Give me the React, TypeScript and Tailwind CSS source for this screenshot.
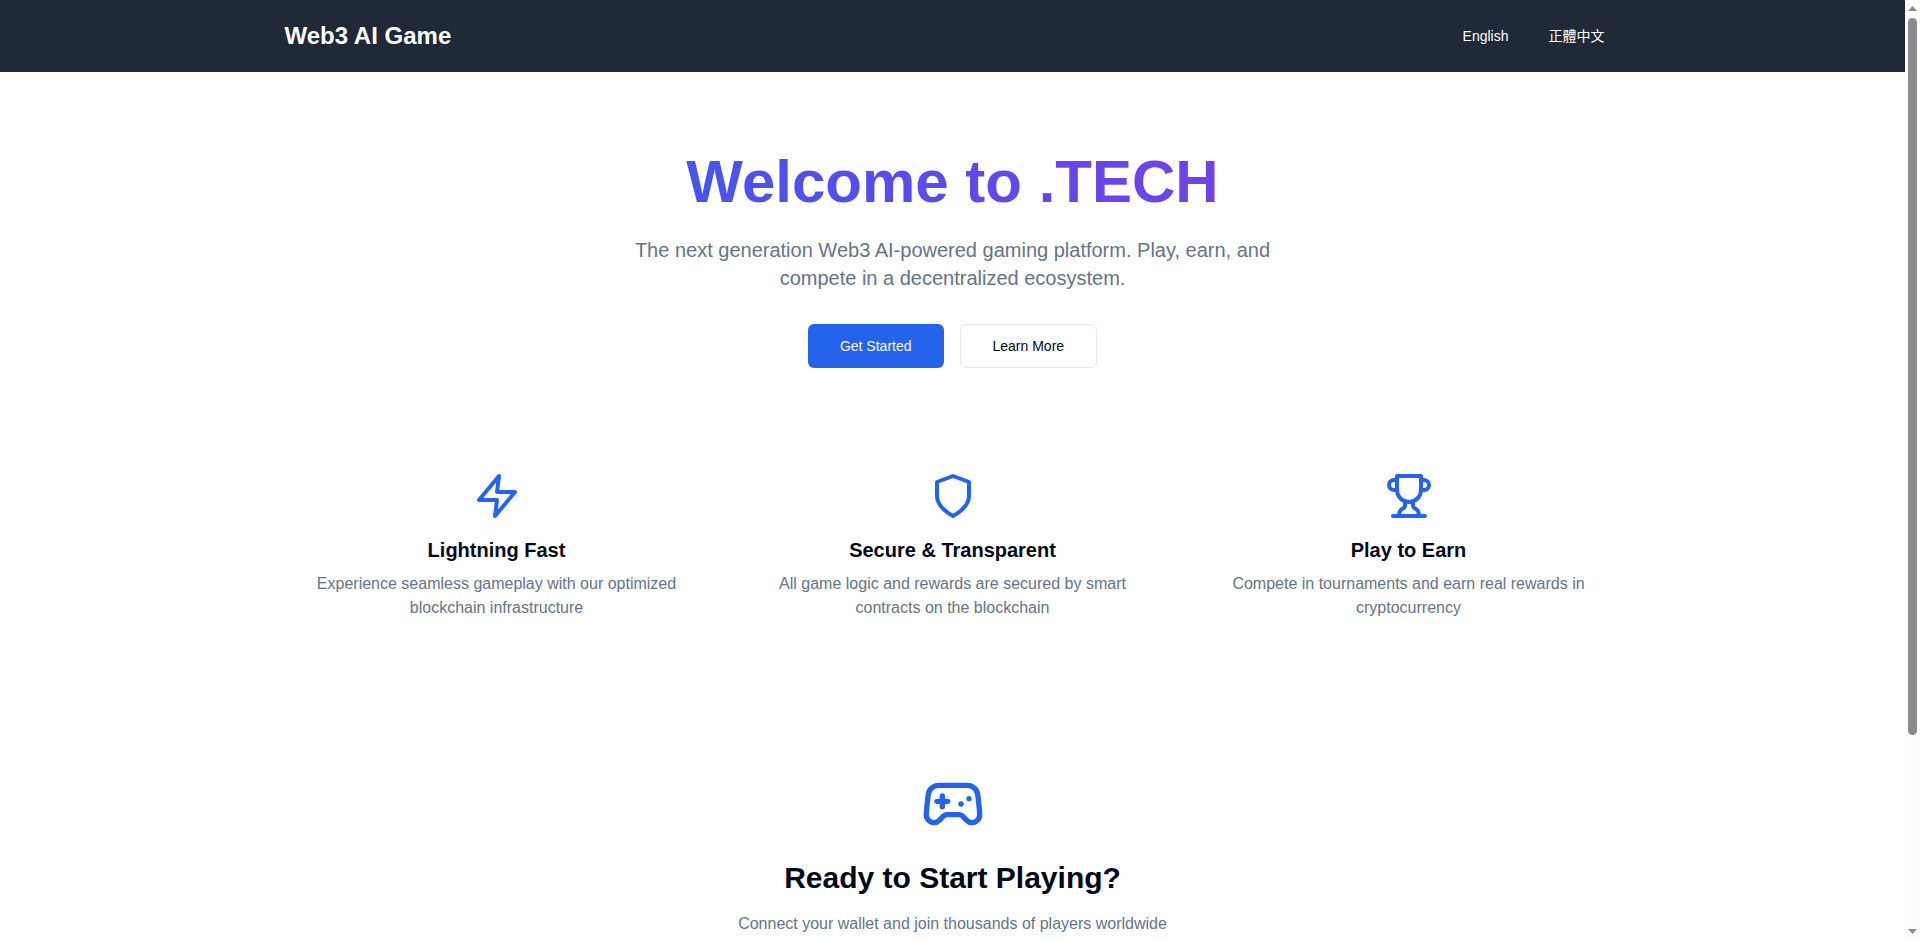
import React from "react";
import { Gamepad2 } from "lucide-react";

type IconProps = { className?: string };

function OutlineIcon({ className, children }: IconProps & { children: React.ReactNode }) {
  return (
    <svg
      className={className}
      viewBox="0 0 24 24"
      fill="none"
      stroke="currentColor"
      strokeWidth="2"
      strokeLinecap="round"
      strokeLinejoin="round"
      aria-hidden="true"
    >
      {children}
    </svg>
  );
}

function BoltIcon({ className }: IconProps) {
  return (
    <OutlineIcon className={className}>
      <polygon points="13 2 3 14 12 14 11 22 21 10 12 10 13 2" />
    </OutlineIcon>
  );
}

function ShieldIcon({ className }: IconProps) {
  return (
    <OutlineIcon className={className}>
      <path d="M12 22s8-4 8-10V5l-8-3-8 3v7c0 6 8 10 8 10" />
    </OutlineIcon>
  );
}

function TrophyIcon({ className }: IconProps) {
  return (
    <OutlineIcon className={className}>
      <path d="M6 9H4.5a2.5 2.5 0 0 1 0-5H6" />
      <path d="M18 9h1.5a2.5 2.5 0 0 0 0-5H18" />
      <path d="M4 22h16" />
      <path d="M10 14.66V17c0 .55-.47.98-.97 1.21C7.85 18.75 7 20.24 7 22" />
      <path d="M14 14.66V17c0 .55.47.98.97 1.21C16.15 18.75 17 20.24 17 22" />
      <path d="M18 2H6v7a6 6 0 0 0 12 0V2Z" />
    </OutlineIcon>
  );
}

const features = [
  {
    icon: BoltIcon,
    title: "Lightning Fast",
    text: "Experience seamless gameplay with our optimized blockchain infrastructure",
  },
  {
    icon: ShieldIcon,
    title: "Secure & Transparent",
    text: "All game logic and rewards are secured by smart contracts on the blockchain",
  },
  {
    icon: TrophyIcon,
    title: "Play to Earn",
    text: "Compete in tournaments and earn real rewards in cryptocurrency",
  },
];

function Header() {
  return (
    <header className="bg-[#1f2937] text-white">
      <div className="mx-auto flex max-w-[1400px] items-center justify-between px-8 py-4">
        <a href="#" className="text-2xl font-bold">
          Web3 AI Game
        </a>
        <nav className="flex gap-2 text-sm">
          <button type="button" className="h-10 px-4">
            English
          </button>
          <button type="button" className="h-10 px-4">
            正體中文
          </button>
        </nav>
      </div>
    </header>
  );
}

function Hero() {
  return (
    <section className="py-20 text-center">
      <h1 className="mb-6 bg-linear-to-r/srgb from-[#2563eb] to-[#9333ea] bg-clip-text text-6xl font-bold text-transparent">
        Welcome to .TECH
      </h1>
      <p className="mx-auto mb-8 max-w-2xl text-xl text-[#64748b]">
        The next generation Web3 AI-powered gaming platform. Play, earn, and compete in a
        decentralized ecosystem.
      </p>
      <div className="flex justify-center gap-4 text-sm">
        <button type="button" className="h-11 rounded-md bg-[#2563eb] px-8 text-[#f8fafc]">
          Get Started
        </button>
        <button type="button" className="h-11 rounded-md border border-[#e2e8f0] bg-white px-8">
          Learn More
        </button>
      </div>
    </section>
  );
}

function Features() {
  return (
    <section className="grid gap-8 md:grid-cols-3">
      {features.map(({ icon: Icon, title, text }) => (
        <article key={title} className="flex flex-col items-center p-6 text-center">
          <Icon className="mb-4 size-12 text-[#2563eb]" />
          <h3 className="mb-2 text-xl font-bold">{title}</h3>
          <p className="text-[#64748b]">{text}</p>
        </article>
      ))}
    </section>
  );
}

function CallToAction() {
  return (
    <section className="flex flex-col items-center pt-32 pb-20 text-center">
      <Gamepad2 className="mb-6 size-16 text-[#2563eb]" aria-hidden="true" />
      <h2 className="mb-4 text-3xl font-bold">Ready to Start Playing?</h2>
      <p className="text-[#64748b]">Connect your wallet and join thousands of players worldwide</p>
    </section>
  );
}

function ScrollRail() {
  return (
    <div className="flex w-[15px] shrink-0 flex-col items-center bg-[#fcfcfc] pt-1.5 pb-[7px]" aria-hidden="true">
      <svg className="mb-[7px] h-[5px] w-[9px] fill-[#8b8b8b]" viewBox="0 0 9 5">
        <path d="M4.5 0 9 5H0z" />
      </svg>
      <div className="flex w-[9px] flex-1 flex-col">
        <div className="h-[787px] max-h-[78.7%] rounded-full bg-[#8b8b8b]" />
      </div>
      <svg className="h-[5px] w-[9px] fill-[#8b8b8b]" viewBox="0 0 9 5">
        <path d="M0 0h9L4.5 5z" />
      </svg>
    </div>
  );
}

export default function App() {
  return (
    <div className="flex h-screen bg-white font-['Liberation_Sans','Noto_Sans_CJK_TC',sans-serif] text-[#020817]">
      <div className="min-w-0 flex-1 overflow-y-auto [scrollbar-width:none]">
        <Header />
        <main className="mx-auto max-w-[1400px] px-8">
          <Hero />
          <Features />
          <CallToAction />
        </main>
      </div>
      <ScrollRail />
    </div>
  );
}
